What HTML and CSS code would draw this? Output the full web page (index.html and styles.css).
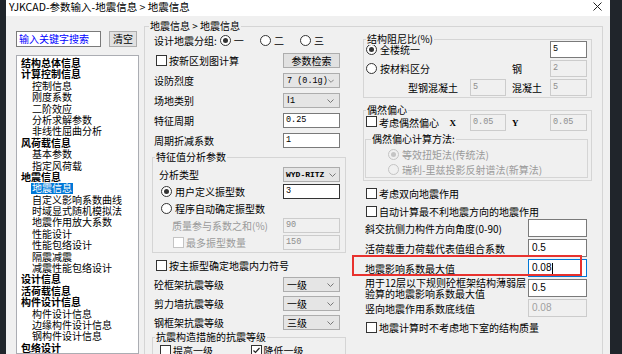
FILE: index.html
```html
<!DOCTYPE html>
<html>

<head>
  <title>YJKCAD-参数输入-地震信息</title>
  <link rel="stylesheet" href="styles.css">
</head>

<body>
  <div class="screen">
    <div class="edge"></div>

    <div class="dialog">
      <div class="titlebar">
        <span>YJKCAD-参数输入-地震信息 &gt; 地震信息</span>
        <svg class="close" width="9" height="9" viewBox="0 0 9 9">
          <path d="M0.5 0.5L8.5 8.5M8.5 0.5L0.5 8.5" stroke="#222" stroke-width="1" fill="none" />
        </svg>
      </div>

      <div class="dialog-body">
        <!-- left: search + tree -->
        <div class="sidebar">
          <div class="search">
            <div class="search-input">输入关键字搜索</div>
            <div class="btn btn-clear">清空</div>
          </div>
          <div class="tree">
            <div class="node head">结构总体信息</div>
            <div class="node head">计算控制信息</div>
            <div class="node sub">控制信息</div>
            <div class="node sub">刚度系数</div>
            <div class="node sub">二阶效应</div>
            <div class="node sub">分析求解参数</div>
            <div class="node sub">非线性屈曲分析</div>
            <div class="node head">风荷载信息</div>
            <div class="node sub">基本参数</div>
            <div class="node sub">指定风荷载</div>
            <div class="node head">地震信息</div>
            <div class="node sub"><span class="selected">地震信息</span></div>
            <div class="node sub">自定义影响系数曲线</div>
            <div class="node sub">时域显式随机模拟法</div>
            <div class="node sub">地震作用放大系数</div>
            <div class="node sub">性能设计</div>
            <div class="node sub">性能包络设计</div>
            <div class="node sub">隔震减震</div>
            <div class="node sub">减震性能包络设计</div>
            <div class="node head">设计信息</div>
            <div class="node head">活荷载信息</div>
            <div class="node head">构件设计信息</div>
            <div class="node sub">构件设计信息</div>
            <div class="node sub">边缘构件设计信息</div>
            <div class="node sub">钢构件设计信息</div>
            <div class="node head">包络设计</div>
          </div>
        </div>

        <!-- main panel -->
        <div class="group main-group">
          <span class="group-title">地震信息 &gt; 地震信息</span>

          <div class="col-left">
            <div class="rows">
              <div class="row">
                <span class="label-fixed">设计地震分组:</span>
                <span class="radio-opt"><span class="rb on"></span>一</span>
                <span class="radio-opt"><span class="rb"></span>二</span>
                <span class="radio-opt"><span class="rb"></span>三</span>
              </div>
              <div class="row">
                <span class="label"><span class="cb"></span>按新区划图计算</span>
                <div class="btn ctl">参数检索</div>
              </div>
              <div class="row">
                <span class="label">设防烈度</span>
                <div class="select ctl"><span class="mono">7 (0.1g)</span><svg width="7" height="4" viewBox="0 0 7 4"><polyline points="0.5,0.5 3.5,3.5 6.5,0.5" fill="none" stroke="#777" /></svg></div>
              </div>
              <div class="row">
                <span class="label">场地类别</span>
                <div class="select ctl"><span class="mono">Ⅰ1</span><svg width="7" height="4" viewBox="0 0 7 4"><polyline points="0.5,0.5 3.5,3.5 6.5,0.5" fill="none" stroke="#777" /></svg></div>
              </div>
              <div class="row">
                <span class="label">特征周期</span>
                <div class="input ctl mono">0.25</div>
              </div>
              <div class="row">
                <span class="label">周期折减系数</span>
                <div class="input ctl mono">1</div>
              </div>
            </div>

            <div class="group modes">
              <span class="group-title">特征值分析参数</span>
              <div class="row">
                <span class="label">分析类型</span>
                <div class="select ctl select-tight"><span class="mono bold small">WYD-RITZ</span><svg width="7" height="4" viewBox="0 0 7 4"><polyline points="0.5,0.5 3.5,3.5 6.5,0.5" fill="none" stroke="#777" /></svg></div>
              </div>
              <div class="row">
                <span class="label opt-in"><span class="rb on"></span>用户定义振型数</span>
                <div class="input ctl input-dark mono">3</div>
              </div>
              <div class="row">
                <span class="label opt-in"><span class="rb"></span>程序自动确定振型数</span>
              </div>
              <div class="row">
                <span class="label indent dim">质量参与系数之和(%)</span>
                <div class="input ctl disabled mono">90</div>
              </div>
              <div class="row">
                <span class="label indent-cb dim"><span class="cb dis"></span>最多振型数量</span>
                <div class="input ctl disabled mono">150</div>
              </div>
            </div>

            <div class="rows tight">
              <div class="row">
                <span class="label"><span class="cb"></span>按主振型确定地震内力符号</span>
              </div>
              <div class="row">
                <span class="label">砼框架抗震等级</span>
                <div class="select ctl"><span>一级</span><svg width="7" height="4" viewBox="0 0 7 4"><polyline points="0.5,0.5 3.5,3.5 6.5,0.5" fill="none" stroke="#777" /></svg></div>
              </div>
              <div class="row">
                <span class="label">剪力墙抗震等级</span>
                <div class="select ctl"><span>一级</span><svg width="7" height="4" viewBox="0 0 7 4"><polyline points="0.5,0.5 3.5,3.5 6.5,0.5" fill="none" stroke="#777" /></svg></div>
              </div>
              <div class="row">
                <span class="label">钢框架抗震等级</span>
                <div class="select ctl"><span>三级</span><svg width="7" height="4" viewBox="0 0 7 4"><polyline points="0.5,0.5 3.5,3.5 6.5,0.5" fill="none" stroke="#777" /></svg></div>
              </div>
            </div>

            <div class="group measures">
              <span class="group-title">抗震构造措施的抗震等级</span>
              <div class="row">
                <span class="measure-opt"><span class="cb"></span>提高一级</span>
                <span class="measure-opt"><span class="cb on"><svg width="9" height="9" viewBox="0 0 9 9"><polyline points="1.5,4.5 3.5,6.5 7.5,2" fill="none" stroke="#222" stroke-width="1.2" /></svg></span>降低一级</span>
              </div>
            </div>
          </div>

          <div class="col-right">
            <div class="group damping">
              <span class="group-title">结构阻尼比(%)</span>
              <div class="pair-grid">
                <span class="opt span3"><span class="rb on"></span>全楼统一</span>
                <div class="small-fld">5</div>

                <span class="opt span2"><span class="rb"></span>按材料区分</span>
                <span class="unit">钢</span>
                <div class="small-fld disabled">2</div>

                <span class="lab-r">型钢混凝土</span>
                <div class="small-fld disabled">5</div>
                <span class="unit">混凝土</span>
                <div class="small-fld disabled">5</div>
              </div>
            </div>

            <div class="group eccent">
              <span class="group-title">偶然偏心</span>
              <div class="pair-grid">
                <span class="opt ecc-check"><span><span class="cb"></span>考虑偶然偏心</span><span class="axis">X</span></span>
                <div class="small-fld disabled">0.05</div>
                <span class="unit axis">Y</span>
                <div class="small-fld disabled">0.05</div>
              </div>
              <div class="group method">
                <span class="group-title">偶然偏心计算方法:</span>
                <div class="method-row dim"><span class="rb dis on"></span>等效扭矩法(传统法)</div>
                <div class="method-row dim"><span class="rb dis"></span>瑞利-里兹投影反射谱法(新算法)</div>
              </div>
            </div>

            <div class="checks">
              <div class="check-row"><span class="cb"></span>考虑双向地震作用</div>
              <div class="check-row"><span class="cb"></span>自动计算最不利地震方向的地震作用</div>
            </div>

            <div class="fields">
              <div class="field-row">
                <span class="label">斜交抗侧力构件方向角度(0-90)</span>
                <div class="fld"></div>
              </div>
              <div class="field-row">
                <span class="label">活荷载重力荷载代表值组合系数</span>
                <div class="fld">0.5</div>
              </div>
              <div class="field-row">
                <span class="label">地震影响系数最大值</span>
                <div class="fld focus">0.08<span class="caret"></span></div>
                <span class="highlight"></span>
              </div>
              <div class="field-row">
                <span class="label two-line">用于12层以下规则砼框架结构薄弱层<br>验算的地震影响系数最大值</span>
                <div class="fld">0.5</div>
              </div>
              <div class="field-row">
                <span class="label">竖向地震作用系数底线值</span>
                <div class="fld disabled">0.08</div>
              </div>
            </div>

            <div class="check-row last"><span class="cb"></span>地震计算时不考虑地下室的结构质量</div>
          </div>
        </div>
      </div>
    </div>

    <div class="edge edge-right"></div>
  </div>
</body>

</html>
```

FILE: styles.css
```css
* {
  box-sizing: border-box;
}

body {
  margin: 0;
  font-family: "Noto Sans CJK SC", "Liberation Sans", sans-serif;
  font-size: 10px;
  color: #000;
}

/* Whole capture */
.screen {
  display: flex;
  width: 622px;
  height: 354px;
  overflow: hidden;
}

.edge {
  width: 6px;
  background-color: #20252b;
}

.edge-right {
  flex: 1;
}

.dialog {
  width: 604px;
  display: flex;
  flex-direction: column;
  background-color: #f0f0f0;
}

.titlebar {
  height: 16px;
  flex: none;
  background-color: #ffffff;
  display: flex;
  justify-content: space-between;
  align-items: flex-start;
  padding: 0 8px 0 3px;
  font-size: 10.5px;
  line-height: 14px;
}

.close {
  margin-top: 2px;
}

.dialog-body {
  flex: 1;
  display: flex;
  overflow: hidden;
}

/* Left side: search and tree */
.sidebar {
  width: 133px;
  flex: none;
  padding: 15px 0 0 10px;
  display: flex;
  flex-direction: column;
}

.search {
  display: flex;
}

.search-input {
  width: 85px;
  height: 16px;
  border: 1px solid #7a7a7a;
  background-color: #ffffff;
  color: #0000ff;
  padding-left: 2px;
  line-height: 14px;
}

.btn {
  height: 16px;
  border: 1px solid #adadad;
  background-color: #e1e1e1;
  text-align: center;
  line-height: 13px;
}

.btn-clear {
  width: 28px;
  margin-left: 8px;
}

.tree {
  margin-top: 8px;
  flex: 1;
  background-color: #ffffff;
  border: 1px solid #abadb3;
  padding-top: 1px;
  line-height: 11.4px;
  white-space: nowrap;
}

.node {
  padding-left: 4px;
  height: 11.4px;
}

.node.head {
  font-weight: bold;
}

.node.sub {
  padding-left: 15px;
}

.selected {
  display: inline-block;
  background-color: #0078d7;
  color: #ffffff;
  padding: 0 1px;
  margin-left: -1px;
  line-height: 10.5px;
  vertical-align: top;
  margin-top: 1px;
}

/* Group boxes */
.group {
  position: relative;
  border: 1px solid #d5d5d5;
}

.group-title {
  position: absolute;
  top: -7px;
  left: 2px;
  padding: 0 1px;
  background-color: #f0f0f0;
  line-height: 12px;
  white-space: nowrap;
}

.main-group {
  width: 459px;
  flex: none;
  margin: 10px 0 0 5px;
  padding: 6px 5px 0 5px;
  display: flex;
  align-items: flex-start;
  border-bottom: none;
}

.main-group > .group-title {
  left: 4px;
}

/* Left column of the panel */
.col-left {
  width: 196px;
  display: flex;
  flex-direction: column;
}

.rows {
  display: flex;
  flex-direction: column;
  gap: 5px;
}

.rows.tight {
  gap: 4px;
  margin-top: 5px;
}

.row {
  height: 15px;
  display: flex;
  align-items: center;
  padding: 0 6px 0 4px;
  white-space: nowrap;
}

.label {
  flex: 1;
  display: flex;
  align-items: center;
  white-space: nowrap;
}

.label-fixed {
  width: 69px;
}

.radio-opt {
  width: 42px;
  display: flex;
  align-items: center;
}

.ctl {
  width: 57px;
  height: 15px;
  flex: none;
}

.select {
  border: 1px solid #adadad;
  background-color: #e5e5e5;
  display: flex;
  align-items: center;
  justify-content: space-between;
  padding: 0 5px 0 3px;
}

.select-tight {
  padding: 0 3px 0 2px;
}

.input {
  border: 1px solid #7a7a7a;
  background-color: #ffffff;
  padding-left: 2px;
  line-height: 13px;
}

.input-dark {
  border-color: #333333;
}

.disabled {
  border-color: #cccccc;
  background-color: #f0f0f0;
  color: #8d8d8d;
}

.dim {
  color: #9a9a9a;
}

.mono {
  font-family: "Liberation Mono", monospace;
  font-size: 8.5px;
}

.mono.small {
  font-size: 8px;
}

.bold {
  font-weight: bold;
}

/* check boxes and radio buttons */
.cb {
  width: 11px;
  height: 11px;
  flex: none;
  display: inline-flex;
  align-items: center;
  justify-content: center;
  border: 1px solid #333333;
  background-color: #ffffff;
  margin: 0 2px 0 2px;
}

.cb.dis {
  border-color: #c4c4c4;
}

.rb {
  width: 11px;
  height: 11px;
  flex: none;
  display: inline-flex;
  align-items: center;
  justify-content: center;
  border: 1px solid #333333;
  border-radius: 50%;
  background-color: #ffffff;
  margin-right: 3px;
}

.rb.on::after {
  content: "";
  width: 5px;
  height: 5px;
  border-radius: 50%;
  background-color: #333333;
}

.rb.dis {
  border-color: #c4c4c4;
  background-color: #f0f0f0;
}

.rb.dis.on::after {
  background-color: #c4c4c4;
}

/* 特征值分析参数 */
.modes {
  margin: 9px 0 0 2px;
  padding: 9px 5px 2px 6px;
  display: flex;
  flex-direction: column;
  gap: 2px;
}

.modes .row {
  padding: 0;
}

.opt-in {
  padding-left: 2px;
}

.indent {
  padding-left: 13px;
}

.indent-cb {
  padding-left: 12px;
}

/* 抗震构造措施 */
.measures {
  margin: 7px 0 0 2px;
  padding: 5px 0 0 1px;
  height: 30px;
}

.measure-opt {
  width: 92px;
  display: flex;
  align-items: center;
}

/* Right column of the panel */
.col-right {
  width: 229px;
  margin-left: 17px;
  display: flex;
  flex-direction: column;
}

.pair-grid {
  display: grid;
  grid-template-columns: 104px 36px 44px 37px;
  grid-auto-rows: 17px;
  row-gap: 2px;
  align-items: center;
  white-space: nowrap;
}

.damping {
  margin-top: 6px;
  padding: 1px 4px 1px 2px;
}

.opt {
  display: flex;
  align-items: center;
}

.span3 {
  grid-column: span 3;
}

.span2 {
  grid-column: span 2;
}

.unit {
  padding-left: 6px;
}

.lab-r {
  text-align: right;
  padding-right: 12px;
}

.small-fld {
  height: 17px;
  border: 1px solid #7a7a7a;
  background-color: #ffffff;
  padding-left: 2px;
  line-height: 15px;
  font-family: "Liberation Mono", monospace;
  font-size: 8.5px;
}

.small-fld.disabled {
  border-color: #cccccc;
  background-color: #f0f0f0;
  color: #8d8d8d;
}

.eccent {
  margin-top: 12px;
  padding: 3px 4px 2px 2px;
}

.ecc-check {
  justify-content: space-between;
  padding-right: 14px;
}

.ecc-check .cb {
  margin-left: 0;
}

.axis {
  font-family: "Liberation Serif", serif;
  font-weight: bold;
  font-size: 9px;
}

.method {
  margin: 8px -1px 0 -1px;
  padding: 7px 0 0 22px;
  height: 39px;
}

.method > .group-title {
  left: 5px;
}

.method-row {
  height: 15px;
  display: flex;
  align-items: center;
  white-space: nowrap;
}

.checks {
  display: flex;
  flex-direction: column;
  gap: 2px;
  margin-top: 4px;
}

.check-row {
  height: 16px;
  display: flex;
  align-items: center;
  padding-left: 1px;
  white-space: nowrap;
}

.check-row.last {
  margin-top: 2px;
}

.fields {
  display: flex;
  flex-direction: column;
  gap: 2px;
}

.field-row {
  position: relative;
  height: 18px;
  display: flex;
  align-items: center;
  padding: 0 5px 0 2px;
}

.two-line {
  display: block;
  line-height: 10.5px;
  margin-top: 1px;
}

.fld {
  width: 59px;
  height: 18px;
  flex: none;
  border: 1px solid #7a7a7a;
  background-color: #ffffff;
  padding-left: 3px;
  line-height: 16px;
  font-family: "Liberation Sans", sans-serif;
  font-size: 10px;
}

.fld.focus {
  border-color: #0078d7;
}

.fld.disabled {
  border-color: #cccccc;
  background-color: #f0f0f0;
  color: #a0a0a0;
}

.caret {
  display: inline-block;
  width: 1px;
  height: 11px;
  background-color: #000000;
  vertical-align: middle;
  margin-left: 1px;
}

/* red annotation box drawn over the row */
.highlight {
  position: absolute;
  left: -11px;
  top: -4px;
  width: 230px;
  height: 21px;
  border: 2px solid #e8322e;
}
```
